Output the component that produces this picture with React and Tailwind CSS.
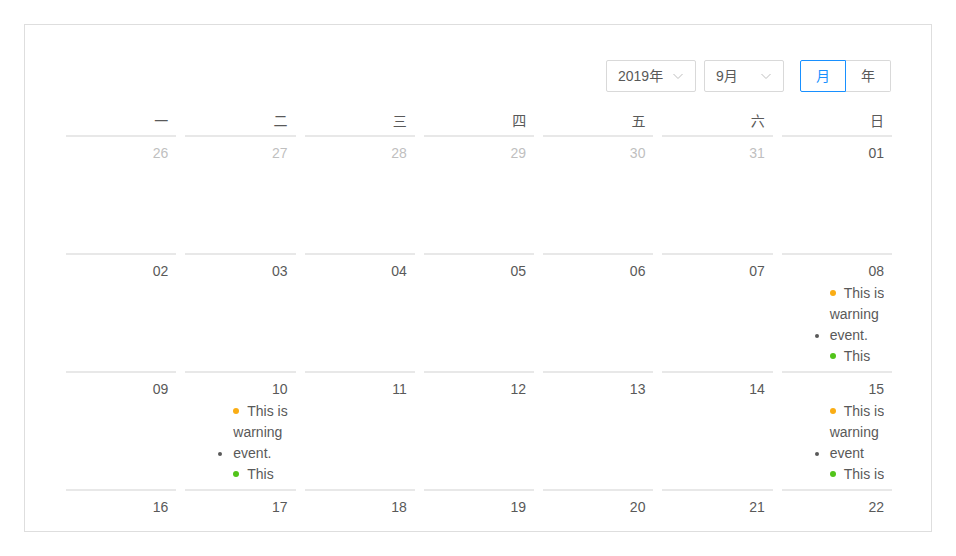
import React from "react";

const weekDays = ["一", "二", "三", "四", "五", "六", "日"];

const dotColors = {
  warning: "bg-[#faad14]",
  success: "bg-[#52c41a]",
  error: "bg-[#f5222d]",
};

const events = {
  8: [
    { type: "warning", lines: ["This is", "warning", "event."] },
    { type: "success", lines: ["This", "is usual", "event."] },
  ],
  10: [
    { type: "warning", lines: ["This is", "warning", "event."] },
    { type: "success", lines: ["This", "is usual", "event."] },
    { type: "error", lines: ["This is", "error", "event."] },
  ],
  15: [
    { type: "warning", lines: ["This is", "warning", "event"] },
    { type: "success", lines: ["This is", "very long", "usual", "event。。...."] },
    { type: "error", lines: ["This is", "error", "event 1."] },
  ],
};

function buildDays() {
  const days = [];
  for (let d = 26; d <= 31; d++) days.push({ day: d, other: true });
  for (let d = 1; d <= 30; d++) days.push({ day: d, other: false });
  for (let d = 1; d <= 6; d++) days.push({ day: d, other: true, next: true });
  return days;
}

function Badge({ type, lines }) {
  return (
    <span className="inline-block whitespace-nowrap">
      <span
        className={`relative -top-px inline-block w-1.5 h-1.5 rounded-full align-middle ${dotColors[type]}`}
      />
      <span className="ml-2">{lines[0]}</span>
      {lines.slice(1).map((l, i) => (
        <React.Fragment key={i}>
          <br />
          {l}
        </React.Fragment>
      ))}
    </span>
  );
}

function DateCell({ item }) {
  const list = !item.other ? events[item.day] : null;
  return (
    <div className="ml-1 mr-[5px] border-t-2 border-[#e8e8e8] pt-1 px-2">
      <div
        className={`text-right leading-6 ${
          item.other ? "text-[#bfbfbf]" : "text-[#595959]"
        }`}
      >
        {String(item.day).padStart(2, "0")}
      </div>
      <div className="h-[88px] overflow-hidden">
        {list && (
          <ul className="list-disc pl-10 m-0 text-[#595959] leading-[21px]">
            {list.map((ev, i) => (
              <li key={i}>
                <Badge type={ev.type} lines={ev.lines} />
              </li>
            ))}
          </ul>
        )}
      </div>
    </div>
  );
}

function Select({ value, width }) {
  return (
    <div
      className={`flex items-center justify-between h-8 px-[11px] border border-[#d9d9d9] rounded-[2px] bg-white text-[#595959] ${width}`}
    >
      <span>{value}</span>
      <svg width="12" height="12" viewBox="0 0 12 12" fill="none">
        <path d="M1.5 4L6 8.5L10.5 4" stroke="#bfbfbf" strokeWidth="1" />
      </svg>
    </div>
  );
}

export default function App() {
  const days = buildDays();
  return (
    <div
      className="min-h-screen bg-white p-6 text-sm"
      style={{ fontFamily: '"Liberation Sans", "Noto Sans CJK SC", sans-serif' }}
    >
      <div className="h-[508px] overflow-hidden border border-[#dedede] pt-[23px] pl-[37px] pr-[34px]">
        <div className="flex justify-end items-center py-3 pr-1.5">
          <Select value="2019年" width="w-[90px]" />
          <div className="ml-2">
            <Select value="9月" width="w-[80px]" />
          </div>
          <div className="ml-4 flex h-8">
            <button className="px-[15px] h-8 border border-[#1890ff] text-[#1890ff] rounded-l-[2px] bg-white">
              月
            </button>
            <button className="px-[15px] h-8 border border-l-0 border-[#d9d9d9] text-[#595959] rounded-r-[2px] bg-white">
              年
            </button>
          </div>
        </div>
        <div className="pt-2">
          <div className="grid grid-cols-7">
            {weekDays.map((w) => (
              <div
                key={w}
                className="text-right pr-[13px] pb-[5px] leading-[18px] text-[#595959]"
              >
                {w}
              </div>
            ))}
          </div>
          <div className="grid grid-cols-7">
            {days.map((item, i) => (
              <DateCell key={i} item={item} />
            ))}
          </div>
        </div>
      </div>
    </div>
  );
}
